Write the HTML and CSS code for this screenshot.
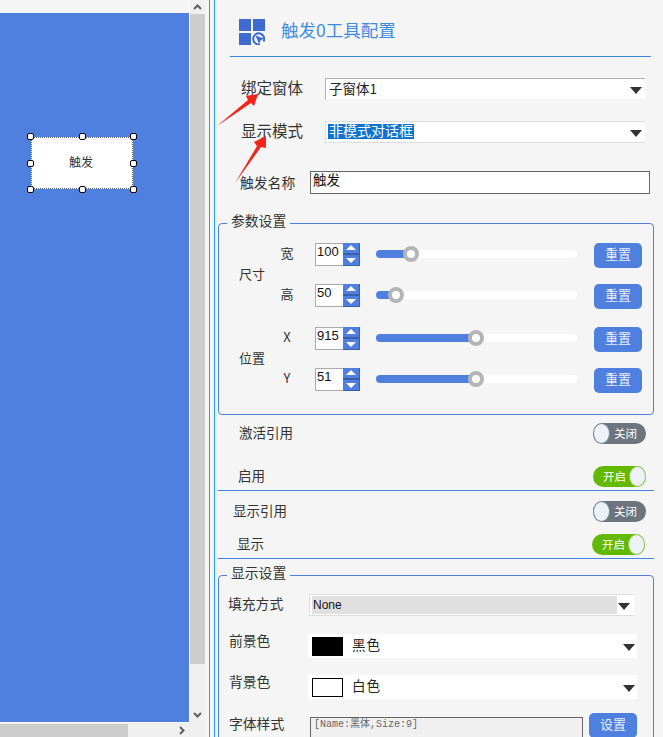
FILE: index.html
```html
<!DOCTYPE html>
<html lang="zh-CN">
<head>
<meta charset="utf-8">
<title>触发0工具配置</title>
<link rel="stylesheet" href="styles.css">
</head>
<body>
<div class="app">
  <section class="workspace">
    <div class="canvas-cell">
      <div class="canvas">
        <div class="widget"><span class="widget-text">触发</span>
          <i class="handle h-tl"></i><i class="handle h-tc"></i><i class="handle h-tr"></i>
          <i class="handle h-ml"></i><i class="handle h-mr"></i>
          <i class="handle h-bl"></i><i class="handle h-bc"></i><i class="handle h-br"></i>
        </div>
      </div>
    </div>
    <div class="vscroll">
      <svg class="sb-arrow" width="9" height="6" viewBox="0 0 9 6"><path d="M1 5 4.500 1.500 8 5" fill="none" stroke="#606060" stroke-width="2"/></svg>
      <div class="vthumb"></div>
      <svg class="sb-arrow" width="9" height="6" viewBox="0 0 9 6"><path d="M1 1 4.500 4.500 8 1" fill="none" stroke="#606060" stroke-width="2"/></svg>
    </div>
    <div class="hscroll">
      <div class="hthumb"></div>
      <svg class="sb-arrow" width="6" height="9" viewBox="0 0 6 9"><path d="M1 1 4.500 4.500 1 8" fill="none" stroke="#606060" stroke-width="2"/></svg>
    </div>
    <div class="corner"></div>
  </section>
  <div class="rail"></div>
  <main class="panel">
    <header class="head">
      <svg class="head-icon" width="26" height="26" viewBox="0 0 26 26">
        <rect x="0" y="0" width="12" height="12" fill="#3f6bd0"/>
        <rect x="14" y="0" width="12" height="12" fill="#3f6bd0"/>
        <rect x="0" y="14" width="12" height="12" fill="#3f6bd0"/>
        <path d="M24.500 22.500A5.500 5.500 0 1 0 21 25.200" fill="none" stroke="#3f6bd0" stroke-width="2"/>
        <polygon points="16.500,16.500 25,19.500 21.500,21.500 20,25" fill="#3f6bd0"/>
      </svg>
      <h1 class="title">触发0工具配置</h1>
    </header>

    <div class="row row-bind">
      <label class="big-label label-bind">绑定窗体</label>
      <div class="combo combo-dark"><span class="combo-text">子窗体1</span><b class="tri"></b></div>
    </div>
    <div class="row row-mode">
      <label class="big-label label-bind">显示模式</label>
      <div class="combo"><span class="selected">非模式对话框</span><b class="tri"></b></div>
    </div>
    <div class="row row-name">
      <label class="label-name">触发名称</label>
      <div class="name-input">触发</div>
    </div>

    <section class="group group-params">
      <span class="legend">参数设置</span>
      <div class="cluster">
        <span class="side">尺寸</span>
        <div class="stack">
          <div class="param">
            <span class="sub">宽</span>
            <div class="spin"><span class="spin-val">100</span><div class="spin-btns"><i class="up"></i><i class="down"></i></div></div>
            <div class="slider"><div class="fill" style="width:35px"><i class="thumb"></i></div></div>
            <button class="btn">重置</button>
          </div>
          <div class="param">
            <span class="sub">高</span>
            <div class="spin"><span class="spin-val">50</span><div class="spin-btns"><i class="up"></i><i class="down"></i></div></div>
            <div class="slider"><div class="fill" style="width:20px"><i class="thumb"></i></div></div>
            <button class="btn">重置</button>
          </div>
        </div>
      </div>
      <div class="cluster">
        <span class="side">位置</span>
        <div class="stack">
          <div class="param">
            <span class="sub">X</span>
            <div class="spin"><span class="spin-val">915</span><div class="spin-btns"><i class="up"></i><i class="down"></i></div></div>
            <div class="slider"><div class="fill" style="width:100px"><i class="thumb"></i></div></div>
            <button class="btn">重置</button>
          </div>
          <div class="param">
            <span class="sub">Y</span>
            <div class="spin"><span class="spin-val">51</span><div class="spin-btns"><i class="up"></i><i class="down"></i></div></div>
            <div class="slider"><div class="fill" style="width:100px"><i class="thumb"></i></div></div>
            <button class="btn">重置</button>
          </div>
        </div>
      </div>
    </section>

    <div class="switch-row sw-activate"><span class="sw-label">激活引用</span><div class="toggle off"><i class="knob"></i><span>关闭</span></div></div>
    <div class="switch-row sw-enable"><span class="sw-label">启用</span><div class="toggle on"><span>开启</span><i class="knob"></i></div></div>
    <div class="rule rule-a"></div>
    <div class="switch-row sw-showref"><span class="sw-label">显示引用</span><div class="toggle off"><i class="knob"></i><span>关闭</span></div></div>
    <div class="switch-row sw-show"><span class="sw-label">显示</span><div class="toggle on"><span>开启</span><i class="knob"></i></div></div>
    <div class="rule rule-b"></div>

    <section class="group group-display">
      <span class="legend">显示设置</span>
      <div class="d-row d-fill">
        <span class="d-label">填充方式</span>
        <div class="combo fill-combo"><span class="fill-val">None</span><b class="tri"></b></div>
      </div>
      <div class="d-row d-fore">
        <span class="d-label">前景色</span>
        <div class="color-combo"><i class="swatch black"></i><span class="color-name">黑色</span><b class="tri"></b></div>
      </div>
      <div class="d-row d-back">
        <span class="d-label">背景色</span>
        <div class="color-combo"><i class="swatch white"></i><span class="color-name">白色</span><b class="tri"></b></div>
      </div>
      <div class="d-row d-font">
        <span class="d-label">字体样式</span>
        <div class="font-box">[Name:黑体,Size:9]</div>
        <button class="btn btn-set">设置</button>
      </div>
    </section>
  </main>
  <svg class="arrows" width="663" height="737" viewBox="0 0 663 737">
    <polygon points="217,126 248,100 246,96 258,94 254,106 251,103" fill="#f5231b"/>
    <polygon points="235,183 257,146 254,142 266,136 266,148 261,147" fill="#f5231b"/>
  </svg>
</div>
</body>
</html>
```
FILE: styles.css
```css
* { box-sizing: border-box; }
html, body { margin: 0; padding: 0; }
body {
  width: 663px;
  height: 737px;
  overflow: hidden;
  background: #f5f5f5;
  color: #333;
  font-family: "Noto Sans CJK SC", "Liberation Sans", sans-serif;
}
.app { position: relative; display: flex; width: 663px; height: 737px; overflow: hidden; }

/* left work area */
.workspace {
  flex: none;
  display: grid;
  grid-template-columns: 190px 15px;
  grid-template-rows: 723px 14px;
  width: 205px;
  height: 737px;
  margin-right: 4px;
}
.canvas-cell { padding-top: 13px; background: #f5f5f5; border-right: 1px solid #fff; }
.canvas { position: relative; height: 709px; background: #4f7fdf; }
.widget {
  position: absolute;
  left: 31px;
  top: 124px;
  width: 102px;
  height: 52px;
  display: flex;
  align-items: center;
  justify-content: center;
  background: #fff;
  outline: 1px dotted #666;
  outline-offset: -1px;
  font-size: 12px;
  color: #333;
}
.widget-text { padding: 0 2px 4px 0; }
.handle {
  position: absolute;
  width: 7px;
  height: 7px;
  background: #fff;
  border: 1px solid #000;
  border-radius: 2px;
}
.h-tl { left: -4px; top: -4px; }
.h-tc { left: 48px; top: -4px; }
.h-tr { left: 99px; top: -4px; }
.h-ml { left: -4px; top: 23px; }
.h-mr { left: 99px; top: 23px; }
.h-bl { left: -4px; top: 49px; }
.h-bc { left: 48px; top: 49px; }
.h-br { left: 99px; top: 49px; }

.vscroll {
  display: flex;
  flex-direction: column;
  align-items: center;
  justify-content: space-between;
  background: #f0f0f0;
  padding: 4px 0 5px;
}
.vthumb { width: 15px; height: 650px; background: #cdcdcd; margin-top: 1px; margin-bottom: 45px; }
.hscroll {
  display: flex;
  align-items: center;
  justify-content: space-between;
  background: #f0f0f0;
  padding-right: 5px;
  padding-top: 1px;
}
.hthumb { width: 128px; height: 13px; background: #cdcdcd; }
.corner { background: #f0f0f0; }
.sb-arrow { display: block; flex: none; }

.rail { flex: none; width: 5px; border-left: 1px solid #1ea0ff; }

/* right panel */
.panel { flex: none; width: 449px; height: 737px; border-left: 1px solid #1ea0ff; background: #f5f5f5; }
.head {
  display: flex;
  align-items: flex-start;
  width: 421px;
  height: 57px;
  margin-left: 15px;
  padding: 19px 0 0 9px;
  border-bottom: 1px solid #3f86e4;
}
.head-icon { flex: none; margin-right: 16px; }
.title {
  margin: -3px 0 0;
  font-size: 17.500px;
  font-weight: 400;
  line-height: 28px;
  color: #3d8ce0;
  white-space: nowrap;
}

.row { display: flex; align-items: center; }
.row-bind { height: 22px; margin-top: 21px; padding-left: 26px; }
.row-mode { height: 22px; margin-top: 21px; padding-left: 26px; }
.row-name { height: 23px; margin-top: 28px; padding-left: 25px; }
.big-label { font-size: 15.500px; color: #333; }
.label-bind { width: 84px; flex: none; white-space: nowrap; padding-bottom: 4px; }
.label-name { width: 70px; flex: none; font-size: 13.800px; color: #333; white-space: nowrap; padding-bottom: 2px; }

.combo {
  position: relative;
  display: flex;
  align-items: center;
  width: 320px;
  height: 22px;
  padding-left: 3px;
  background: #fff;
  border-top: 1px solid #ddd;
  border-left: 1px solid #ddd;
  border-bottom: 1px solid #ddd;
  font-size: 13.500px;
  color: #222;
}
.combo-dark { border-top-color: #b0b0b0; border-left-color: #b0b0b0; border-bottom-color: #f0f0f0; }
.combo-text { padding-bottom: 3px; }
.selected { margin: 0 0 1px -1px; padding: 0 1px; background: #0a74d0; color: #fff; line-height: 13px; height: 15px; font-size: 14px; white-space: nowrap; }
.tri {
  position: absolute;
  right: 3px;
  top: 8px;
  width: 0;
  height: 0;
  border-left: 6.500px solid transparent;
  border-right: 6.500px solid transparent;
  border-top: 7px solid #333;
}
.name-input {
  width: 340px;
  height: 23px;
  padding-left: 2px;
  background: #fff;
  border: 1px solid #666;
  font-size: 13.500px;
  line-height: 14px;
  color: #111;
}

.group { position: relative; margin-left: 3px; width: 436px; border: 1px solid #4f7fdf; border-radius: 4px; }
.legend {
  position: absolute;
  left: 8px;
  top: -13px;
  padding: 0 4px;
  background: #f5f5f5;
  font-size: 13.800px;
  line-height: 18px;
  color: #333;
  white-space: nowrap;
}
.group-params { height: 192px; margin-top: 29px; padding: 19px 0 0 20px; }
.cluster { display: flex; align-items: center; margin-bottom: 18px; }
.side { flex: none; width: 40px; padding-bottom: 5px; font-size: 13px; color: #333; white-space: nowrap; }
.stack { display: flex; flex-direction: column; gap: 16px; }
.param { display: flex; align-items: flex-start; height: 25px; }
.sub { flex: none; width: 16px; margin-right: 20px; font-size: 13px; line-height: 20px; text-align: center; color: #333; }
.spin { flex: none; display: flex; width: 45px; height: 23px; }
.spin-val {
  width: 28px;
  height: 23px;
  padding-left: 1px;
  background: #fff;
  border: 1px solid #aaa;
  border-right: 0;
  font-family: "Liberation Sans", sans-serif;
  font-size: 13px;
  line-height: 15px;
  color: #111;
}
.spin-btns { width: 17px; height: 23px; display: flex; flex-direction: column; background: #4f7fdf; border: 1px solid #3a60ac; border-left: 0; border-top: 0; }
.spin-btns i { position: relative; display: block; height: 11px; }
.spin-btns .up { border-bottom: 2px solid #3a60ac; height: 12px; }
.spin-btns .up::after, .spin-btns .down::after {
  content: "";
  position: absolute;
  left: 3px;
  width: 0;
  height: 0;
  border-left: 5px solid transparent;
  border-right: 5px solid transparent;
}
.spin-btns .up::after { top: 2px; border-bottom: 5px solid #fff; }
.spin-btns .down::after { top: 3px; border-top: 5px solid #fff; }
.slider { flex: none; width: 201px; height: 8px; margin: 7px 17px 0 16px; background: #fff; border-radius: 4px; }
.fill { position: relative; height: 8px; background: #4f7fdf; border-radius: 4px 0 0 4px; }
.thumb {
  position: absolute;
  right: -8px;
  top: -4px;
  width: 16px;
  height: 16px;
  background: #fff;
  border: 4px solid #b5b5b5;
  border-radius: 50%;
}
.btn {
  flex: none;
  width: 48px;
  height: 25px;
  padding: 0 0 3px;
  background: #4f7fdf;
  border: 0;
  border-radius: 5px;
  color: #e8eefb;
  font-family: inherit;
  font-size: 13px;
  line-height: 22px;
}

.switch-row { display: flex; align-items: center; justify-content: space-between; height: 21px; font-size: 13.500px; color: #333; }
.sw-label { padding-bottom: 4px; }
.sw-activate { width: 431px; margin-top: 8px; padding-left: 24px; }
.sw-enable { width: 431px; margin-top: 22px; padding-left: 23px; }
.sw-showref { width: 431px; margin-top: 10px; padding-left: 18px; }
.sw-show { width: 430px; margin-top: 12px; padding-left: 22px; }
.rule { height: 1px; margin-left: 3px; width: 436px; background: #3f86e4; }
.rule-a { margin-top: 3px; }
.rule-b { margin-top: 3px; }
.toggle {
  display: flex;
  align-items: center;
  width: 53px;
  height: 21px;
  border-radius: 11px;
  font-size: 11.500px;
  color: #fff;
  white-space: nowrap;
}
.toggle.off { background: #6c757d; }
.toggle.on { background: #63b800; }
.toggle span { flex: 1; line-height: 20px; padding-bottom: 1px; }
.toggle.off span { padding-left: 4px; }
.toggle.on span { padding-left: 10px; }
.knob { flex: none; width: 17px; height: 21px; background: #eef2f6; border: 1px solid #7a8a96; border-radius: 50%; }
.toggle.on .knob { border-color: #8fcb55; }

.group-display { height: 180px; margin-top: 16px; }
.d-row { position: relative; display: flex; align-items: flex-start; }
.d-label { flex: none; font-size: 13.800px; color: #333; white-space: nowrap; line-height: 20px; }
.d-fill { margin-top: 18px; height: 22px; padding-left: 9px; }
.d-fill .d-label { width: 81px; margin-top: -1px; }
.fill-combo { width: 325px; padding-left: 2px; background: #fff; }
.fill-val { width: 305px; height: 18px; background: #e0e0e0; font-family: "Liberation Sans", sans-serif; font-size: 12px; line-height: 18px; padding-left: 1px; color: #111; }
.fill-combo .tri { right: 4px; top: 8px; }
.d-fore { margin-top: 18px; height: 24px; padding-left: 10px; }
.d-back { margin-top: 17px; height: 24px; padding-left: 10px; }
.d-fore .d-label, .d-back .d-label { width: 79px; margin-top: -4px; }
.color-combo { position: relative; display: flex; align-items: center; width: 329px; height: 24px; padding-left: 4px; background: #fff; }
.color-combo .tri { right: 2px; top: 10px; }
.swatch { flex: none; width: 31px; height: 19px; border: 1px solid #000; }
.swatch.black { background: #000; }
.swatch.white { background: #fff; }
.color-name { margin-left: 9px; padding-bottom: 4px; font-size: 13.500px; color: #222; letter-spacing: 1px; }
.d-font { margin-top: 14px; height: 30px; padding-left: 10px; }
.d-font .d-label { width: 81px; margin-top: 0; }
.font-box {
  flex: none;
  width: 273px;
  height: 30px;
  margin-top: 4px;
  padding-left: 3px;
  background: #f0f0f0;
  border: 1px solid #666;
  font-family: "Liberation Mono", "Noto Sans CJK SC", monospace;
  font-size: 10px;
  line-height: 14px;
  color: #666;
  white-space: nowrap;
}
.btn-set { margin-left: 6px; }

.arrows { position: absolute; left: 0; top: 0; pointer-events: none; }
```
